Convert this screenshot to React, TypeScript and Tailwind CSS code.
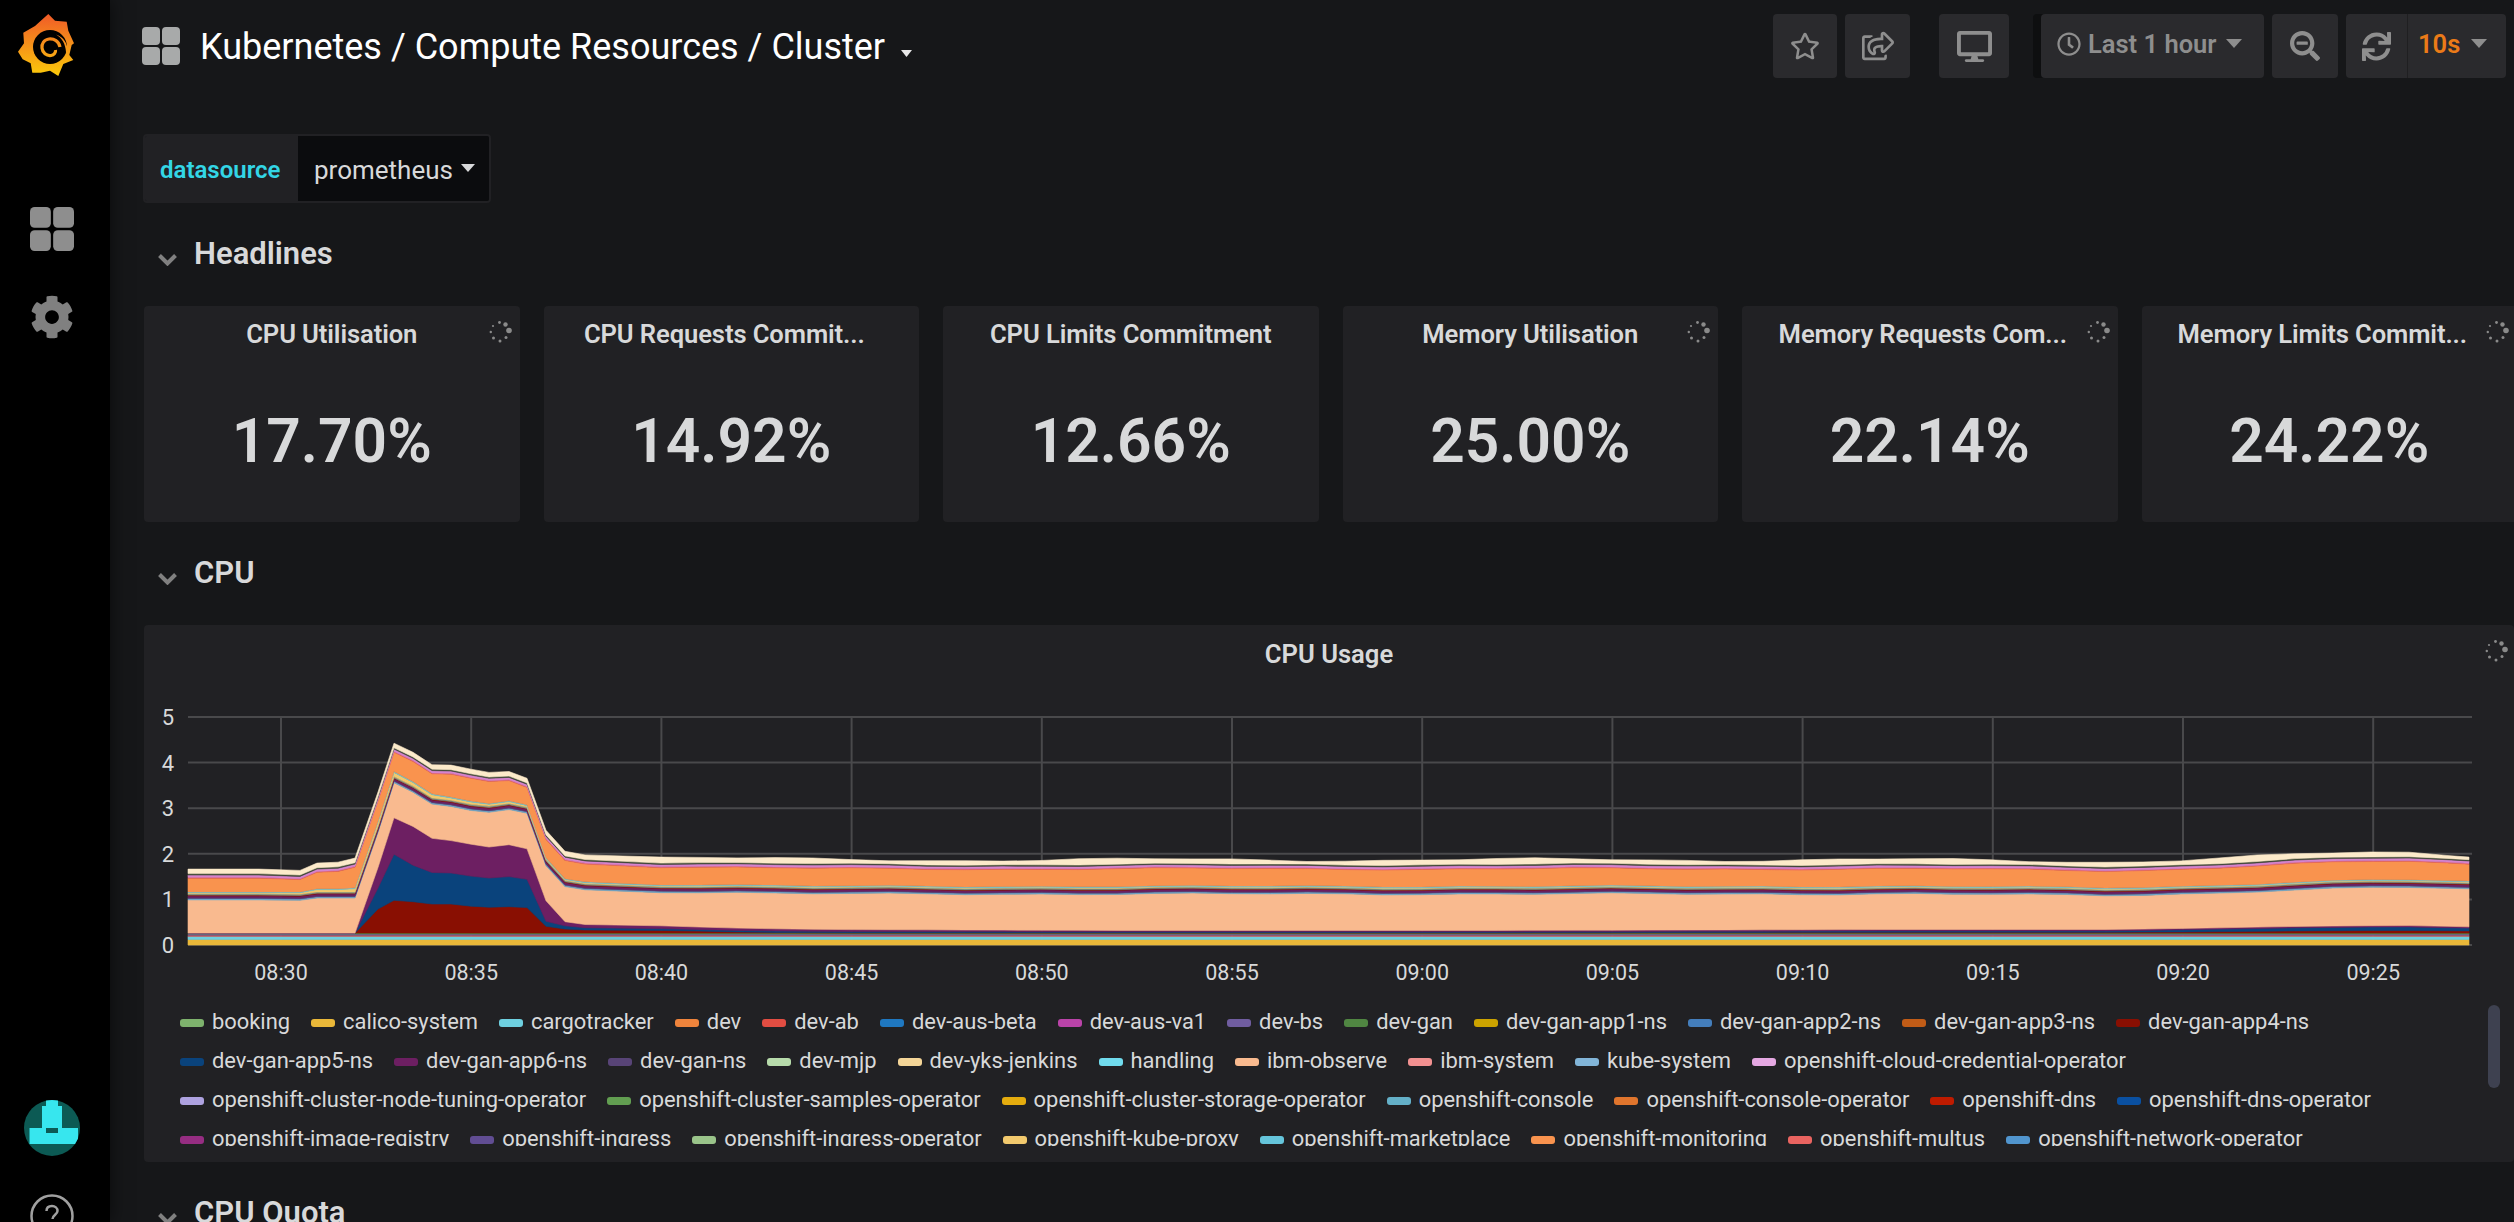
import React from "react";
import { FaCog, FaDesktop, FaRegClock, FaRegShareSquare, FaRegStar, FaSearchMinus, FaSync } from "react-icons/fa";

const K = [188,259,300,317,338,355,378,394,413,432,451,471,489,509,527,546,565,585,661,755,826,1100,1500,1900,2117,2200,2300,2400,2469];
const c = (v: number) => K.map(() => v);

type Layer = { color: string; v: number[]; wob?: number; ph?: number };

const LAYERS: Layer[] = [
  { color: "#eab839", v: c(0.12) },
  { color: "#6ed0e0", v: c(0.07) },
  { color: "#e24d42", v: c(0.025) },
  { color: "#705da0", v: c(0.025) },
  { color: "#508642", v: c(0.02) },
  { color: "#890f02", v: [0,0,0,0,0,0,.53,.72,.69,.64,.64,.59,.57,.58,.56,.15,.09,.07,.06,.02,.01,.01,.01,.02,.02,.03,.05,.06,.05] },
  { color: "#0a437c", v: [0,0,0,0,0,0,.46,1.01,.80,.69,.68,.66,.64,.66,.62,.11,.07,.05,.04,.03,.03,.02,.02,.03,.03,.05,.07,.08,.06] },
  { color: "#6d1f62", v: [0,0,0,0,0,0,.45,.80,.85,.75,.71,.70,.68,.70,.67,.45,.09,.07,.06,.05,.04,.03,.03,.03,.03,.03,.03,.03,.03] },
  { color: "#f9ba8f", v: [.73,.73,.72,.77,.77,.77,.77,.77,.75,.75,.75,.74,.76,.77,.78,.77,.77,.76,.75,.78,.78,.80,.80,.78,.75,.76,.80,.84,.82], wob: 0.012, ph: 0.3 },
  { color: "#70a8c8", v: c(0.03) },
  { color: "#584477", v: c(0.02) },
  { color: "#6d1f62", v: c(0.04) },
  { color: "#890f02", v: c(0.015) },
  { color: "#7f8f80", v: c(0.03) },
  { color: "#f2c96d", v: [.02,.02,.03,.05,.05,.07,.09,.09,.08,.07,.05,.05,.04,.04,.03,.02,.02,.02,.015,.015,.015,.015,.015,.015,.015,.015,.015,.015,.015] },
  { color: "#65c5db", v: c(0.02) },
  { color: "#f9934e", v: [.30,.30,.27,.36,.38,.45,.44,.42,.44,.44,.50,.50,.48,.44,.38,.40,.40,.39,.38,.38,.38,.38,.38,.38,.37,.38,.40,.40,.38], wob: 0.01, ph: 1.4 },
  { color: "#ea6460", v: c(0.02) },
  { color: "#d683ce", v: c(0.05) },
  { color: "#3f4a36", v: c(0.03) },
  { color: "#fceaca", v: c(0.1), wob: 0.022, ph: 2.2 },
];

const sample = (() => {
  const xs = K.filter((x) => x <= 661);
  for (let x = 699; x < 2469; x += 38) xs.push(x);
  xs.push(2469);
  return xs;
})();

const lerp = (arr: number[], x: number) => {
  for (let i = 0; i < K.length - 1; i++) {
    if (x <= K[i + 1]) {
      const t = (x - K[i]) / (K[i + 1] - K[i]);
      return arr[i] + (arr[i + 1] - arr[i]) * t;
    }
  }
  return arr[arr.length - 1];
};

const Y = (v: number) => 945 - v * 45.6;

const paths = (() => {
  let base = sample.map(() => 0);
  return LAYERS.map((l) => {
    const top = sample.map((x, i) => {
      const w = l.wob && x > 600 ? l.wob * (Math.sin(x / 61 + (l.ph || 0)) + Math.sin(x / 23 + 2 * (l.ph || 0))) : 0;
      return base[i] + Math.max(0, lerp(l.v, x) + w);
    });
    const up = sample.map((x, i) => `${x},${Y(top[i]).toFixed(1)}`).join(" L");
    const down = sample.map((x, i) => `${x},${Y(base[i]).toFixed(1)}`).reverse().join(" L");
    base = top;
    return { d: `M${up} L${down} Z`, color: l.color };
  });
})();

const TIMES = ["08:30","08:35","08:40","08:45","08:50","08:55","09:00","09:05","09:10","09:15","09:20","09:25"];

const LEGEND: [string, string][] = [
  ["booking","#7eb26d"],["calico-system","#eab839"],["cargotracker","#6ed0e0"],["dev","#ef843c"],["dev-ab","#e24d42"],["dev-aus-beta","#1f78c1"],["dev-aus-va1","#ba43a9"],["dev-bs","#705da0"],["dev-gan","#508642"],["dev-gan-app1-ns","#cca300"],["dev-gan-app2-ns","#447ebc"],["dev-gan-app3-ns","#c15c17"],["dev-gan-app4-ns","#890f02"],
  ["dev-gan-app5-ns","#0a437c"],["dev-gan-app6-ns","#6d1f62"],["dev-gan-ns","#584477"],["dev-mjp","#b7dbab"],["dev-yks-jenkins","#f4d598"],["handling","#70dbed"],["ibm-observe","#f9ba8f"],["ibm-system","#f29191"],["kube-system","#82b5d8"],["openshift-cloud-credential-operator","#e5a8e2"],
  ["openshift-cluster-node-tuning-operator","#aea2e0"],["openshift-cluster-samples-operator","#629e51"],["openshift-cluster-storage-operator","#e5ac0e"],["openshift-console","#64b0c8"],["openshift-console-operator","#e0752d"],["openshift-dns","#bf1b00"],["openshift-dns-operator","#0a50a1"],
  ["openshift-image-registry","#962d82"],["openshift-ingress","#614d93"],["openshift-ingress-operator","#9ac48a"],["openshift-kube-proxy","#f2c96d"],["openshift-marketplace","#65c5db"],["openshift-monitoring","#f9934e"],["openshift-multus","#ea6460"],["openshift-network-operator","#5195ce"],
];

const STATS = [
  { title: "CPU Utilisation", value: "17.70%", spin: true, cut: false },
  { title: "CPU Requests Commit...", value: "14.92%", spin: false, cut: true },
  { title: "CPU Limits Commitment", value: "12.66%", spin: false, cut: false },
  { title: "Memory Utilisation", value: "25.00%", spin: true, cut: false },
  { title: "Memory Requests Com...", value: "22.14%", spin: true, cut: true },
  { title: "Memory Limits Commit...", value: "24.22%", spin: true, cut: true },
];

function GridIcon({ size, color }: { size: number; color: string }) {
  return (
    <svg width={size} height={size} viewBox="0 0 38 38" fill={color}>
      <rect x="0" y="0" width="18" height="18" rx="4" />
      <rect x="20" y="0" width="18" height="18" rx="4" />
      <rect x="0" y="20" width="18" height="18" rx="4" />
      <rect x="20" y="20" width="18" height="18" rx="4" />
    </svg>
  );
}

function Logo() {
  return (
    <svg width="56" height="62" viewBox="0 0 56 62">
      <defs>
        <linearGradient id="gs" gradientUnits="userSpaceOnUse" x1="0" y1="0" x2="0" y2="62">
          <stop offset="0" stopColor="#f05a28" />
          <stop offset="1" stopColor="#fbca0a" />
        </linearGradient>
      </defs>
      <polygon
        fill="url(#gs)"
        points="30.3,0 37,6.7 48.7,7.7 50.3,16.7 56,29.3 53.7,31 51.3,41 55.3,46 45.3,50 40.3,62 32,56.7 22.700,58.7 14.3,58.7 12.7,49.3 4.7,45.3 0,37.7 6,29.3 5.3,18.7 17,12"
      />
      <circle cx="32" cy="33" r="17" fill="#000" />
      <path d="M42 33 C 41 27 36 24.500 31 25 C 26 25.500 23.500 30 24 34 C 24.500 39 28.500 42 33 41.500 C 36 41 38 38.500 37.500 36" fill="none" stroke="url(#gs)" strokeWidth="3.200" />
      <path d="M53 29 C 50 21 42 15.500 33 15.500 L 38 12 C 46 14 53 20 53 29 Z" fill="url(#gs)" />
      <path d="M48 38 C 47.500 30 44 24 38 20.500 C 46 23 50 30 49.500 38 Z" fill="url(#gs)" />
    </svg>
  );
}

function Avatar() {
  return (
    <svg width="56" height="56" viewBox="0 0 56 56">
      <defs>
        <clipPath id="av"><circle cx="28" cy="28" r="28" /></clipPath>
      </defs>
      <circle cx="28" cy="28" r="28" fill="#0c5a54" />
      <path fill="#37e6ee" d="M22 0h12v6h4v22h16v16H5.500V28H18V6h4z" clipPath="url(#av)" />
      <rect x="22" y="28" width="12" height="5" fill="#0c5a54" />
    </svg>
  );
}

function Help() {
  return (
    <svg width="44" height="44" viewBox="0 0 44 44" fill="none" stroke="#a0a0a0">
      <circle cx="22" cy="22" r="20.500" strokeWidth="2.500" />
      <path d="M16.500 17 C 16.500 13.500 19 12 22 12 C 25 12 27.500 14 27.500 17 C 27.500 20.500 22.500 21 22.500 25" strokeWidth="2.500" />
      <circle cx="22.500" cy="30.500" r="1.700" fill="#a0a0a0" stroke="none" />
    </svg>
  );
}

function Spinner() {
  const dots = [
    [10.5, 1.5, 1.4], [16.5, 3.5, 2.2], [20, 9.5, 2.8], [17, 16.5, 1.5], [11, 20, 1.5], [4.5, 17, 1.5], [1.8, 11, 1.2], [4, 5, 1.1],
  ];
  return (
    <svg width="24" height="24" viewBox="-1 -1 24 24" fill="#8a8a8a">
      {dots.map(([x, y, r], i) => (
        <circle key={i} cx={x} cy={y} r={r} />
      ))}
    </svg>
  );
}

function Chevron() {
  return (
    <svg width="19" height="12" viewBox="0 0 19 12" fill="none" stroke="#808080" strokeWidth="4">
      <polyline points="1.500,1.500 9.500,9.500 17.500,1.500" />
    </svg>
  );
}

function Caret({ w = 16, h = 9, color = "#8e8e8e" }: { w?: number; h?: number; color?: string }) {
  return (
    <svg width={w} height={h} viewBox="0 0 16 9" fill={color} preserveAspectRatio="none">
      <polygon points="0,0 16,0 8,9" />
    </svg>
  );
}

function RowHeader({ title }: { title: string }) {
  return (
    <div className="flex h-[103px] items-center pl-[14px]">
      <span className="mt-[10px] mr-[17px]"><Chevron /></span>
      <span className="mt-[-2px] text-[31px] font-semibold leading-none text-[#d8d9da]">{title}</span>
    </div>
  );
}

function NavButton({ children, w }: { children: React.ReactNode; w: string }) {
  return <div className={`flex h-[64px] items-center justify-center rounded-[4px] bg-[#2a2a2d] text-[#8e8e8e] ${w}`}>{children}</div>;
}

function Chart() {
  const hl = [5, 4, 3, 2, 1, 0];
  return (
    <svg width="2370" height="320" viewBox="144 680 2370 320" className="block">
      {hl.map((n) => (
        <line key={n} x1="188" x2="2472" y1={Y(n)} y2={Y(n)} stroke="#49494b" strokeWidth="2" />
      ))}
      {TIMES.map((t, i) => (
        <line key={t} x1={281 + i * 190.2} x2={281 + i * 190.2} y1="717" y2="945" stroke="#49494b" strokeWidth="2" />
      ))}
      {paths.map((p, i) => (
        <path key={i} d={p.d} fill={p.color} stroke={p.color} strokeWidth="0.6" />
      ))}
      {hl.map((n) => (
        <text key={n} x="168" y={Y(n) + 8} textAnchor="middle" fontSize="22" fill="#d8d9da">{n}</text>
      ))}
      {TIMES.map((t, i) => (
        <text key={t} x={281 + i * 190.2} y="980" textAnchor="middle" fontSize="21.500" fill="#d8d9da">{t}</text>
      ))}
    </svg>
  );
}

export default function App() {
  return (
    <div className="flex h-[1222px] w-[2514px] overflow-hidden bg-[#161719] [font-family:Roboto,sans-serif]">
      <aside className="relative z-10 flex w-[110px] shrink-0 flex-col items-center bg-black shadow-[0_0_18px_rgba(0,0,0,0.6)]">
        <div className="mt-[14px] ml-[-18px]"><Logo /></div>
        <div className="mt-[131px] ml-[-6px]"><GridIcon size={44} color="#8e8e8e" /></div>
        <div className="mt-[44px] ml-[-6px] text-[#808080]"><FaCog size={44} /></div>
        <div className="mt-[761px] ml-[-6px]"><Avatar /></div>
        <div className="mt-[38px] ml-[-6px]"><Help /></div>
      </aside>

      <main className="min-w-0 flex-1 overflow-hidden">
        <div className="flex h-[134px] items-start pl-[32px] pr-[8px]">
          <div className="mt-[27px]"><GridIcon size={38} color="#a8aaaa" /></div>
          <div className="ml-[20px] mt-[26px] text-[36px] leading-[42px] text-white">Kubernetes / Compute Resources / Cluster</div>
          <div className="ml-[16px] mt-[50px]"><Caret w={11} h={7} color="#e8e8e8" /></div>
          <div className="ml-auto mt-[14px] flex gap-[8px]">
            <NavButton w="w-[64px]"><FaRegStar size={30} /></NavButton>
            <NavButton w="w-[65px]"><FaRegShareSquare size={32} /></NavButton>
            <NavButton w="ml-[21px] w-[70px]"><FaDesktop size={35} /></NavButton>
            <div className="ml-[24px] flex h-[64px] w-[223px] items-center rounded-[4px] bg-[#2a2a2d] pl-[16px] text-[#8e8e8e] shadow-[-8px_0_0_#0e0f10]">
              <FaRegClock size={24} className="mt-[-4px]" />
              <span className="ml-[7px] mt-[-2px] text-[25.500px] font-semibold leading-none">Last 1 hour</span>
              <span className="ml-[10px] mt-[-6px]"><Caret /></span>
            </div>
            <NavButton w="w-[66px]"><FaSearchMinus size={30} /></NavButton>
            <div className="flex h-[64px] w-[160px] items-center rounded-[4px] bg-[#2a2a2d] text-[#8e8e8e]">
              <div className="flex h-full w-[62px] items-center justify-center border-r border-[#1f1f21]"><FaSync size={29} /></div>
              <span className="ml-[10px] mt-[-2px] text-[25.500px] font-semibold leading-none text-[#eb7b18]">10s</span>
              <span className="ml-[11px] mt-[-6px]"><Caret /></span>
            </div>
          </div>
        </div>

        <div className="ml-[33px] flex h-[69px] w-[348px] overflow-hidden rounded-[4px] border-[2px] border-[#212124]">
          <div className="flex w-[153px] items-center bg-[#212124] pl-[15px] pt-[3px] text-[24px] font-semibold text-[#33d6e6]">datasource</div>
          <div className="flex flex-1 items-center bg-[#0b0c0e] pl-[16px] pt-[4px] text-[26px] text-[#d8d9da]">
            prometheus
            <span className="ml-[8px] mt-[-5px]"><Caret w={14} h={8} color="#d8d9da" /></span>
          </div>
        </div>

        <div className="pl-[34px]">
          <RowHeader title="Headlines" />
          <div className="flex gap-[24px]">
            {STATS.map((s) => (
              <div key={s.title} className="relative flex h-[216px] w-[375.500px] shrink-0 flex-col items-center rounded-[4px] bg-[#212124]">
                <div className={`mt-[13px] text-[25.600px] font-semibold leading-[30px] tracking-[-0.1px] text-[#d8d9da] ${s.cut ? "mr-[14px]" : ""}`}>{s.title}</div>
                <div className="mt-[63px] text-[60.500px] font-semibold leading-none text-[#d8d9da]">{s.value}</div>
                {s.spin && <span className="absolute right-[8px] top-[14px]"><Spinner /></span>}
              </div>
            ))}
          </div>
          <RowHeader title="CPU" />
          <div className="relative h-[537px] rounded-[4px] bg-[#212124]">
            <div className="flex h-[55px] items-center justify-center pt-[4px] text-[25.600px] font-semibold text-[#d8d9da]">CPU Usage</div>
            <span className="absolute right-[6px] top-[14px]"><Spinner /></span>
            <Chart />
            <div className="ml-[36px] mt-[3px] flex h-[143px] w-[2300px] flex-wrap content-start overflow-hidden">
              {LEGEND.map(([n, col]) => (
                <div key={n} className="mr-[21px] flex h-[39px] items-center text-[21.900px] text-[#d8d9da]">
                  <span className="mr-[8px] h-[8px] w-[24px] rounded-[3px]" style={{ backgroundColor: col }} />
                  {n}
                </div>
              ))}
            </div>
            <div className="absolute left-[2344px] top-[380px] h-[83px] w-[12px] rounded-[6px] bg-[#3e4150]" />
          </div>
          <RowHeader title="CPU Quota" />
        </div>
      </main>
    </div>
  );
}
